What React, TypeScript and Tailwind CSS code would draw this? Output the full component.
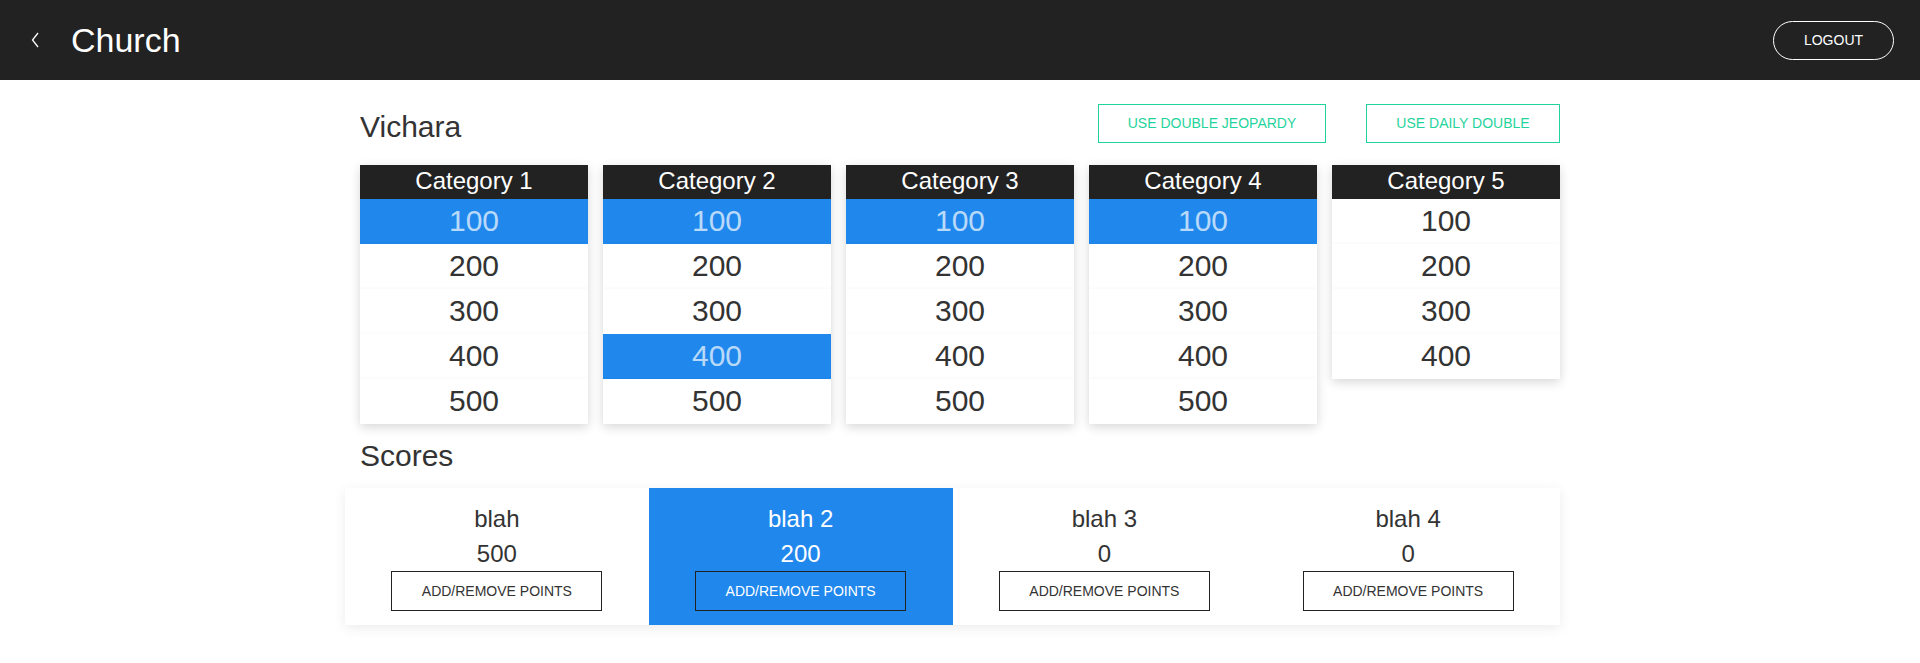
const categories = [
  { name: "Category 1", values: [100, 200, 300, 400, 500], used: [100] },
  { name: "Category 2", values: [100, 200, 300, 400, 500], used: [100, 400] },
  { name: "Category 3", values: [100, 200, 300, 400, 500], used: [100] },
  { name: "Category 4", values: [100, 200, 300, 400, 500], used: [100] },
  { name: "Category 5", values: [100, 200, 300, 400], used: [] as number[] },
];

const players = [
  { name: "blah", score: 500, active: false },
  { name: "blah 2", score: 200, active: true },
  { name: "blah 3", score: 0, active: false },
  { name: "blah 4", score: 0, active: false },
];

function CategoryColumn({ name, values, used }: { name: string; values: number[]; used: number[] }) {
  return (
    <div className="flex flex-col shadow-[0_3px_10px_rgba(0,0,0,0.16)]">
      <div className="flex h-[34px] items-center justify-center bg-[#222] pb-[2px] text-[24px] leading-none text-white">
        {name}
      </div>
      {values.map((v) => {
        const isUsed = used.includes(v);
        return (
          <div
            key={v}
            className={
              isUsed
                ? "relative flex h-[45px] items-center justify-center bg-[#2088ed] pb-[2px] text-[30px] text-white/70"
                : "relative flex h-[45px] items-center justify-center bg-white pb-[2px] text-[30px] text-[#333] shadow-[0_-2px_3px_rgba(0,0,0,0.02)]"
            }
          >
            {v}
          </div>
        );
      })}
    </div>
  );
}

export default function App() {
  return (
    <div className="min-h-[663px] bg-white font-['Liberation_Sans',Arial,sans-serif] text-[#333]">
      <header className="flex h-[80px] items-center justify-between bg-[#222] pl-[31px] pr-[26px]">
        <div className="flex items-center">
          <svg width="8" height="16" viewBox="0 0 8 16" className="mr-[32px]">
            <polyline points="7,1 1.5,8 7,15" fill="none" stroke="white" strokeWidth="1.3" />
          </svg>
          <span className="text-[34px] leading-none text-white">Church</span>
        </div>
        <button
          type="button"
          className="h-[39px] w-[121px] rounded-full border border-white text-[14px] text-white"
        >
          LOGOUT
        </button>
      </header>

      <main className="mx-auto w-[1200px] pt-[24px]">
        <div className="flex items-start justify-between">
          <h1 className="mt-[5px] text-[30px] leading-[36px]">Vichara</h1>
          <div className="flex gap-[40px]">
            <button
              type="button"
              className="h-[39px] w-[228px] border border-[#1fd49c] text-[14px] text-[#1fd49c]"
            >
              USE DOUBLE JEOPARDY
            </button>
            <button
              type="button"
              className="h-[39px] w-[194px] border border-[#1fd49c] text-[14px] text-[#1fd49c]"
            >
              USE DAILY DOUBLE
            </button>
          </div>
        </div>

        <div className="mt-[20px] grid grid-cols-5 items-start gap-[15px]">
          {categories.map((c) => (
            <CategoryColumn key={c.name} {...c} />
          ))}
        </div>

        <h2 className="mt-[14px] text-[30px] leading-[36px]">Scores</h2>

        <div className="mt-[14px] -ml-[15px] grid grid-cols-4 shadow-[0_3px_12px_rgba(0,0,0,0.08)]">
          {players.map((p) => (
            <div
              key={p.name}
              className={
                p.active
                  ? "flex flex-col items-center bg-[#2088ed] pt-[13px] pb-[14px] text-white"
                  : "flex flex-col items-center bg-white pt-[13px] pb-[14px] text-[#333]"
              }
            >
              <div className="h-[35px] text-[24px] leading-[35px]">{p.name}</div>
              <div className="h-[35px] text-[24px] leading-[35px]">{p.score}</div>
              <button
                type="button"
                className="h-[40px] w-[211px] border border-[#222] text-[14px]"
              >
                ADD/REMOVE POINTS
              </button>
            </div>
          ))}
        </div>
      </main>
    </div>
  );
}
